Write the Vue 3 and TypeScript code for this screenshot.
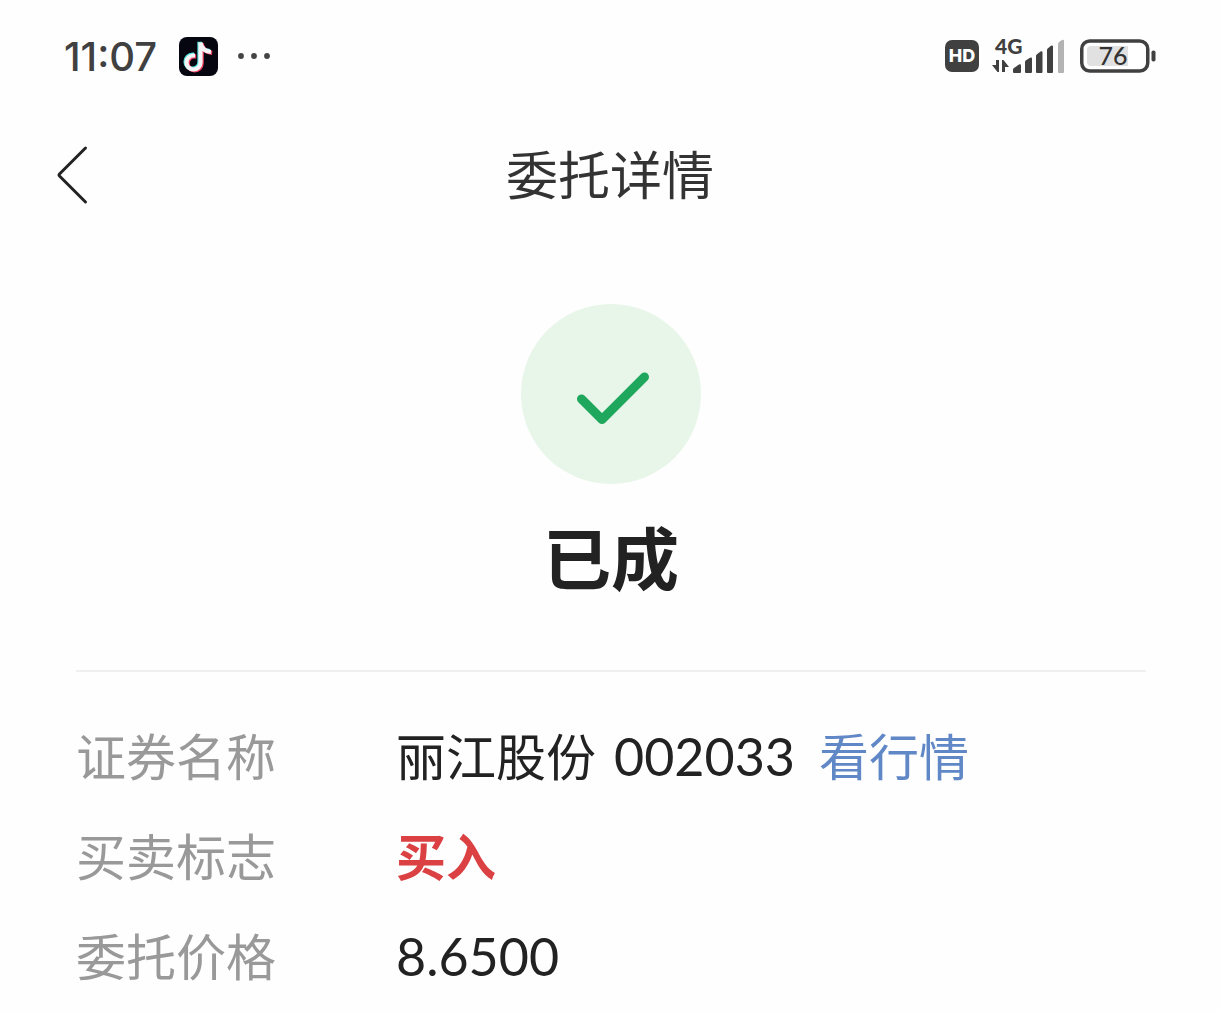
<script setup lang="ts">
interface Detail {
  label: string
  value: string
  code?: string
  link?: string
  kind: 'text' | 'number' | 'buy'
}

const details: Detail[] = [
  { label: '证券名称', value: '丽江股份', code: '002033', link: '看行情', kind: 'text' },
  { label: '买卖标志', value: '买入', kind: 'buy' },
  { label: '委托价格', value: '8.6500', kind: 'number' },
]

const battery = 76
</script>

<template>
  <div class="screen">
    <div class="status-bar">
      <div class="status-left">
        <span class="clock">11:07</span>
        <svg class="app-icon" viewBox="0 0 39 39" aria-hidden="true">
          <rect width="39" height="39" rx="8" fill="#05060f" />
          <g fill="none" stroke-width="4.200">
            <g stroke="#4fe3df" transform="translate(-1 -0.800)">
              <path d="M21.500 5.500V25.500A7 7 0 1 1 14.500 18.500H16" />
              <path d="M21.500 6C22.500 11.500 26 14.500 32 15" />
            </g>
            <g stroke="#f0405f" transform="translate(1.200 0.800)">
              <path d="M21.500 5.500V25.500A7 7 0 1 1 14.500 18.500H16" />
              <path d="M21.500 6C22.500 11.500 26 14.500 32 15" />
            </g>
            <g stroke="#f4f4f6">
              <path d="M21.500 5.500V25.500A7 7 0 1 1 14.500 18.500H16" />
              <path d="M21.500 6C22.500 11.500 26 14.500 32 15" />
            </g>
          </g>
        </svg>
        <svg class="more" viewBox="0 0 34 8" aria-hidden="true">
          <g fill="#444">
            <circle cx="4" cy="4" r="2.900" />
            <circle cx="17" cy="4" r="2.900" />
            <circle cx="30" cy="4" r="2.900" />
          </g>
        </svg>
      </div>
      <div class="status-right">
        <span class="hd">HD</span>
        <svg class="signal" viewBox="0 -6 74 48" role="img" aria-label="4G">
          <text x="4" y="16" class="network">4G</text>
          <g fill="#404040">
            <path d="M5 22H8V34H6.500L1 27H5Z" />
            <path d="M11 34V22H12.500L18 29H14V34Z" />
            <path d="M22 34V31.500Q22 30.500 23 30L28 26.500Q30 25.500 30 27.500V34Q30 35 29 35H23Q22 35 22 34Z" />
            <path d="M34 34V24Q34 23 35 22.300L39 19.800Q41 18.800 41 20.500V34Q41 35 40 35H35Q34 35 34 34Z" />
            <path d="M45 34V18Q45 17 46 16.200L49.500 13.500Q51.500 12.500 51.500 14.500V34Q51.500 35 50.500 35H46Q45 35 45 34Z" />
            <path d="M56 34V12Q56 11 57 10.200L60 7.800Q62 6.800 62 8.800V34Q62 35 61 35H57Q56 35 56 34Z" />
          </g>
          <path fill="#b3b3b3" d="M67 34V7Q67 5 68 4L71 2Q73 1 73 3V34Q73 35 72 35H68Q67 35 67 34Z" />
        </svg>
        <svg class="battery" viewBox="0 0 76 34" role="img" aria-label="电量">
          <rect x="1.750" y="2" width="66" height="30" rx="8" fill="#fff" stroke="#404040" stroke-width="3.500" />
          <path d="M48 7V27H11Q7 27 7 23V11Q7 7 11 7Z" fill="#e1e1e1" />
          <rect x="71.500" y="11.500" width="4" height="11" rx="1.800" fill="#404040" />
          <text x="33" y="26" text-anchor="middle" class="level">{{ battery }}</text>
        </svg>
      </div>
    </div>

    <header class="nav">
      <button class="back" type="button" aria-label="返回">
        <svg viewBox="0 0 32 60" aria-hidden="true">
          <path d="M29.500 3L3.500 29Q2.500 30 3.500 31L29.500 57" fill="none" stroke="#222" stroke-width="3" stroke-linecap="round" />
        </svg>
      </button>
      <h1>委托详情</h1>
    </header>

    <main>
      <section class="result">
        <svg class="badge" viewBox="0 0 180 180" aria-hidden="true">
          <circle cx="90" cy="90" r="90" fill="#e7f6e9" />
          <path d="M60.500 95L81 115.500L123.500 73" fill="none" stroke="#1fa75d" stroke-width="9" stroke-linecap="round" stroke-linejoin="round" />
        </svg>
        <h2>已成</h2>
      </section>

      <dl class="details">
        <div v-for="item in details" :key="item.label" class="row">
          <dt>{{ item.label }}</dt>
          <dd>
            <span :class="item.kind">{{ item.value }}</span>
            <span v-if="item.code" class="number code">{{ item.code }}</span>
            <a v-if="item.link" href="#">{{ item.link }}</a>
          </dd>
        </div>
      </dl>
    </main>
  </div>
</template>

<style>
body {
  margin: 0;
  background: #fefefe;
}
</style>

<style scoped>
.screen {
  font-family: "Noto Sans CJK SC", sans-serif;
  color: #222;
}

.status-bar {
  display: flex;
  justify-content: space-between;
  align-items: center;
  height: 112px;
  padding: 0 64px;
}

.status-left,
.status-right {
  display: flex;
  align-items: center;
}

.clock {
  width: 94px;
  margin-right: 21px;
  padding-top: 2px;
  font: 500 40px/48px Inter, sans-serif;
  color: #404040;
}

.app-icon {
  width: 39px;
  height: 39px;
}

.more {
  width: 34px;
  height: 8px;
  margin-left: 19px;
}

.hd {
  width: 34px;
  border-radius: 7px;
  background: #404040;
  color: #fff;
  font: 800 18px/32px Inter, sans-serif;
  text-align: center;
}

.signal {
  width: 74px;
  height: 48px;
  margin: 0 15px 0 12px;
}

.network {
  font: 900 21px Lato, sans-serif;
  fill: #404040;
}

.battery {
  width: 76px;
  height: 34px;
}

.level {
  font: 500 25px Lato, sans-serif;
  fill: #333;
}

.nav {
  display: grid;
  grid-template-columns: 1fr auto 1fr;
  align-items: center;
  height: 126px;
  padding: 0 56px;
}

.back {
  justify-self: start;
  padding: 0;
  border: 0;
  background: none;
  cursor: pointer;
}

.back svg {
  display: block;
  width: 32px;
  height: 60px;
}

h1 {
  margin: 0 0 4px;
  font-size: 52px;
  font-weight: 400;
  line-height: 72px;
  color: #333;
}

main {
  padding: 0 74px 0 76px;
}

.result {
  display: flex;
  flex-direction: column;
  align-items: center;
  padding: 66px 0;
  border-bottom: 2px solid #efefef;
}

.badge {
  width: 180px;
  height: 180px;
}

h2 {
  margin: 24px 0 0;
  font-size: 68px;
  font-weight: 700;
  line-height: 96px;
}

.details {
  margin: 0;
  padding-top: 32px;
}

.row {
  display: grid;
  grid-template-columns: 320px 1fr;
  align-items: center;
  height: 100px;
  font-size: 50px;
  line-height: 72px;
}

dt {
  color: #999;
}

dd {
  display: flex;
  align-items: center;
  margin: 0;
}

.number {
  padding-top: 4px;
  font-family: Lato, sans-serif;
  font-size: 52px;
}

.code {
  margin-left: 18px;
}

.buy {
  font-weight: 700;
  color: #db4043;
}

a {
  margin-left: 24px;
  color: #6087c6;
  text-decoration: none;
}
</style>
